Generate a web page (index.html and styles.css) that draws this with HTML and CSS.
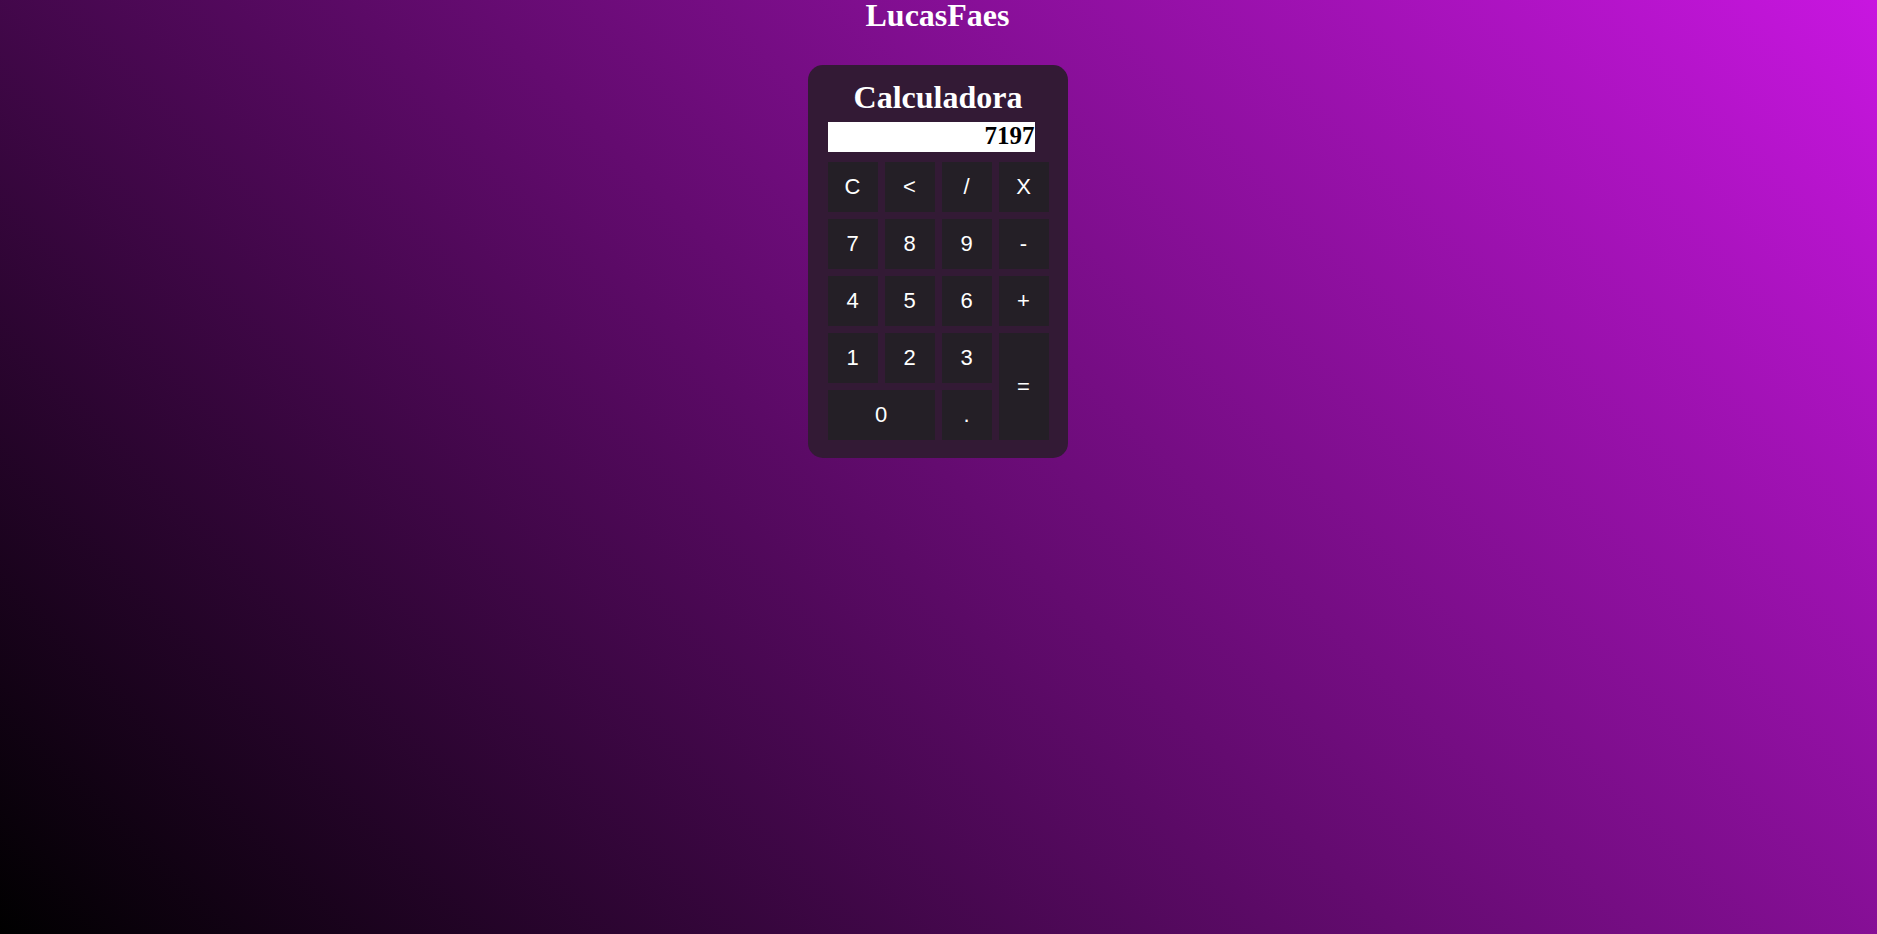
FILE: index.html
```html
<!DOCTYPE html>
<html lang="pt">
<head>
<meta charset="utf-8">
<title>Calculadora</title>
<link rel="stylesheet" href="styles.css">
</head>
<body>
<h1 class="brand">LucasFaes</h1>
<div class="calc">
  <h2 class="calc-title">Calculadora</h2>
  <div class="display">7197</div>
  <div class="keys">
    <button class="key">C</button>
    <button class="key">&lt;</button>
    <button class="key">/</button>
    <button class="key">X</button>
    <button class="key">7</button>
    <button class="key">8</button>
    <button class="key">9</button>
    <button class="key">-</button>
    <button class="key">4</button>
    <button class="key">5</button>
    <button class="key">6</button>
    <button class="key">+</button>
    <button class="key">1</button>
    <button class="key">2</button>
    <button class="key">3</button>
    <button class="key key-eq">=</button>
    <button class="key key-zero">0</button>
    <button class="key">.</button>
  </div>
</div>
</body>
</html>
```

FILE: styles.css
```css
html, body {
  margin: 0;
  padding: 0;
  height: 100%;
}
body {
  background: linear-gradient(45deg, #000000, #c816e0);
  font-family: "Liberation Serif", "Times New Roman", serif;
  display: flex;
  flex-direction: column;
  align-items: center;
}
.brand {
  margin: 0 0 35px 0;
  font-size: 32px;
  line-height: 30px;
  font-weight: bold;
  color: #ffffff;
  transform: translateX(-1px);
}
.calc {
  background: #331a35;
  border-radius: 15px;
  padding: 14px 19px 18px 20px;
  display: flex;
  flex-direction: column;
  align-items: flex-start;
  transform: translateX(-1px);
}
.calc-title {
  align-self: stretch;
  text-align: center;
  margin: 0 0 6px 0;
  font-size: 32px;
  line-height: 37px;
  font-weight: bold;
  color: #ffffff;
}
.display {
  width: 207px;
  height: 30px;
  line-height: 28px;
  background: #ffffff;
  color: #000000;
  font-size: 25px;
  font-weight: bold;
  text-align: right;
  margin-bottom: 10px;
}
.keys {
  display: grid;
  grid-template-columns: repeat(4, 50px);
  grid-auto-rows: 50px;
  column-gap: 7px;
  row-gap: 7px;
}
.key {
  border: none;
  margin: 0;
  padding: 0;
  background: #241f26;
  color: #ffffff;
  font-family: "Liberation Sans", Arial, sans-serif;
  font-size: 22px;
}
.key-eq {
  grid-column: 4;
  grid-row: 4 / span 2;
}
.key-zero {
  grid-column: 1 / span 2;
}
```
